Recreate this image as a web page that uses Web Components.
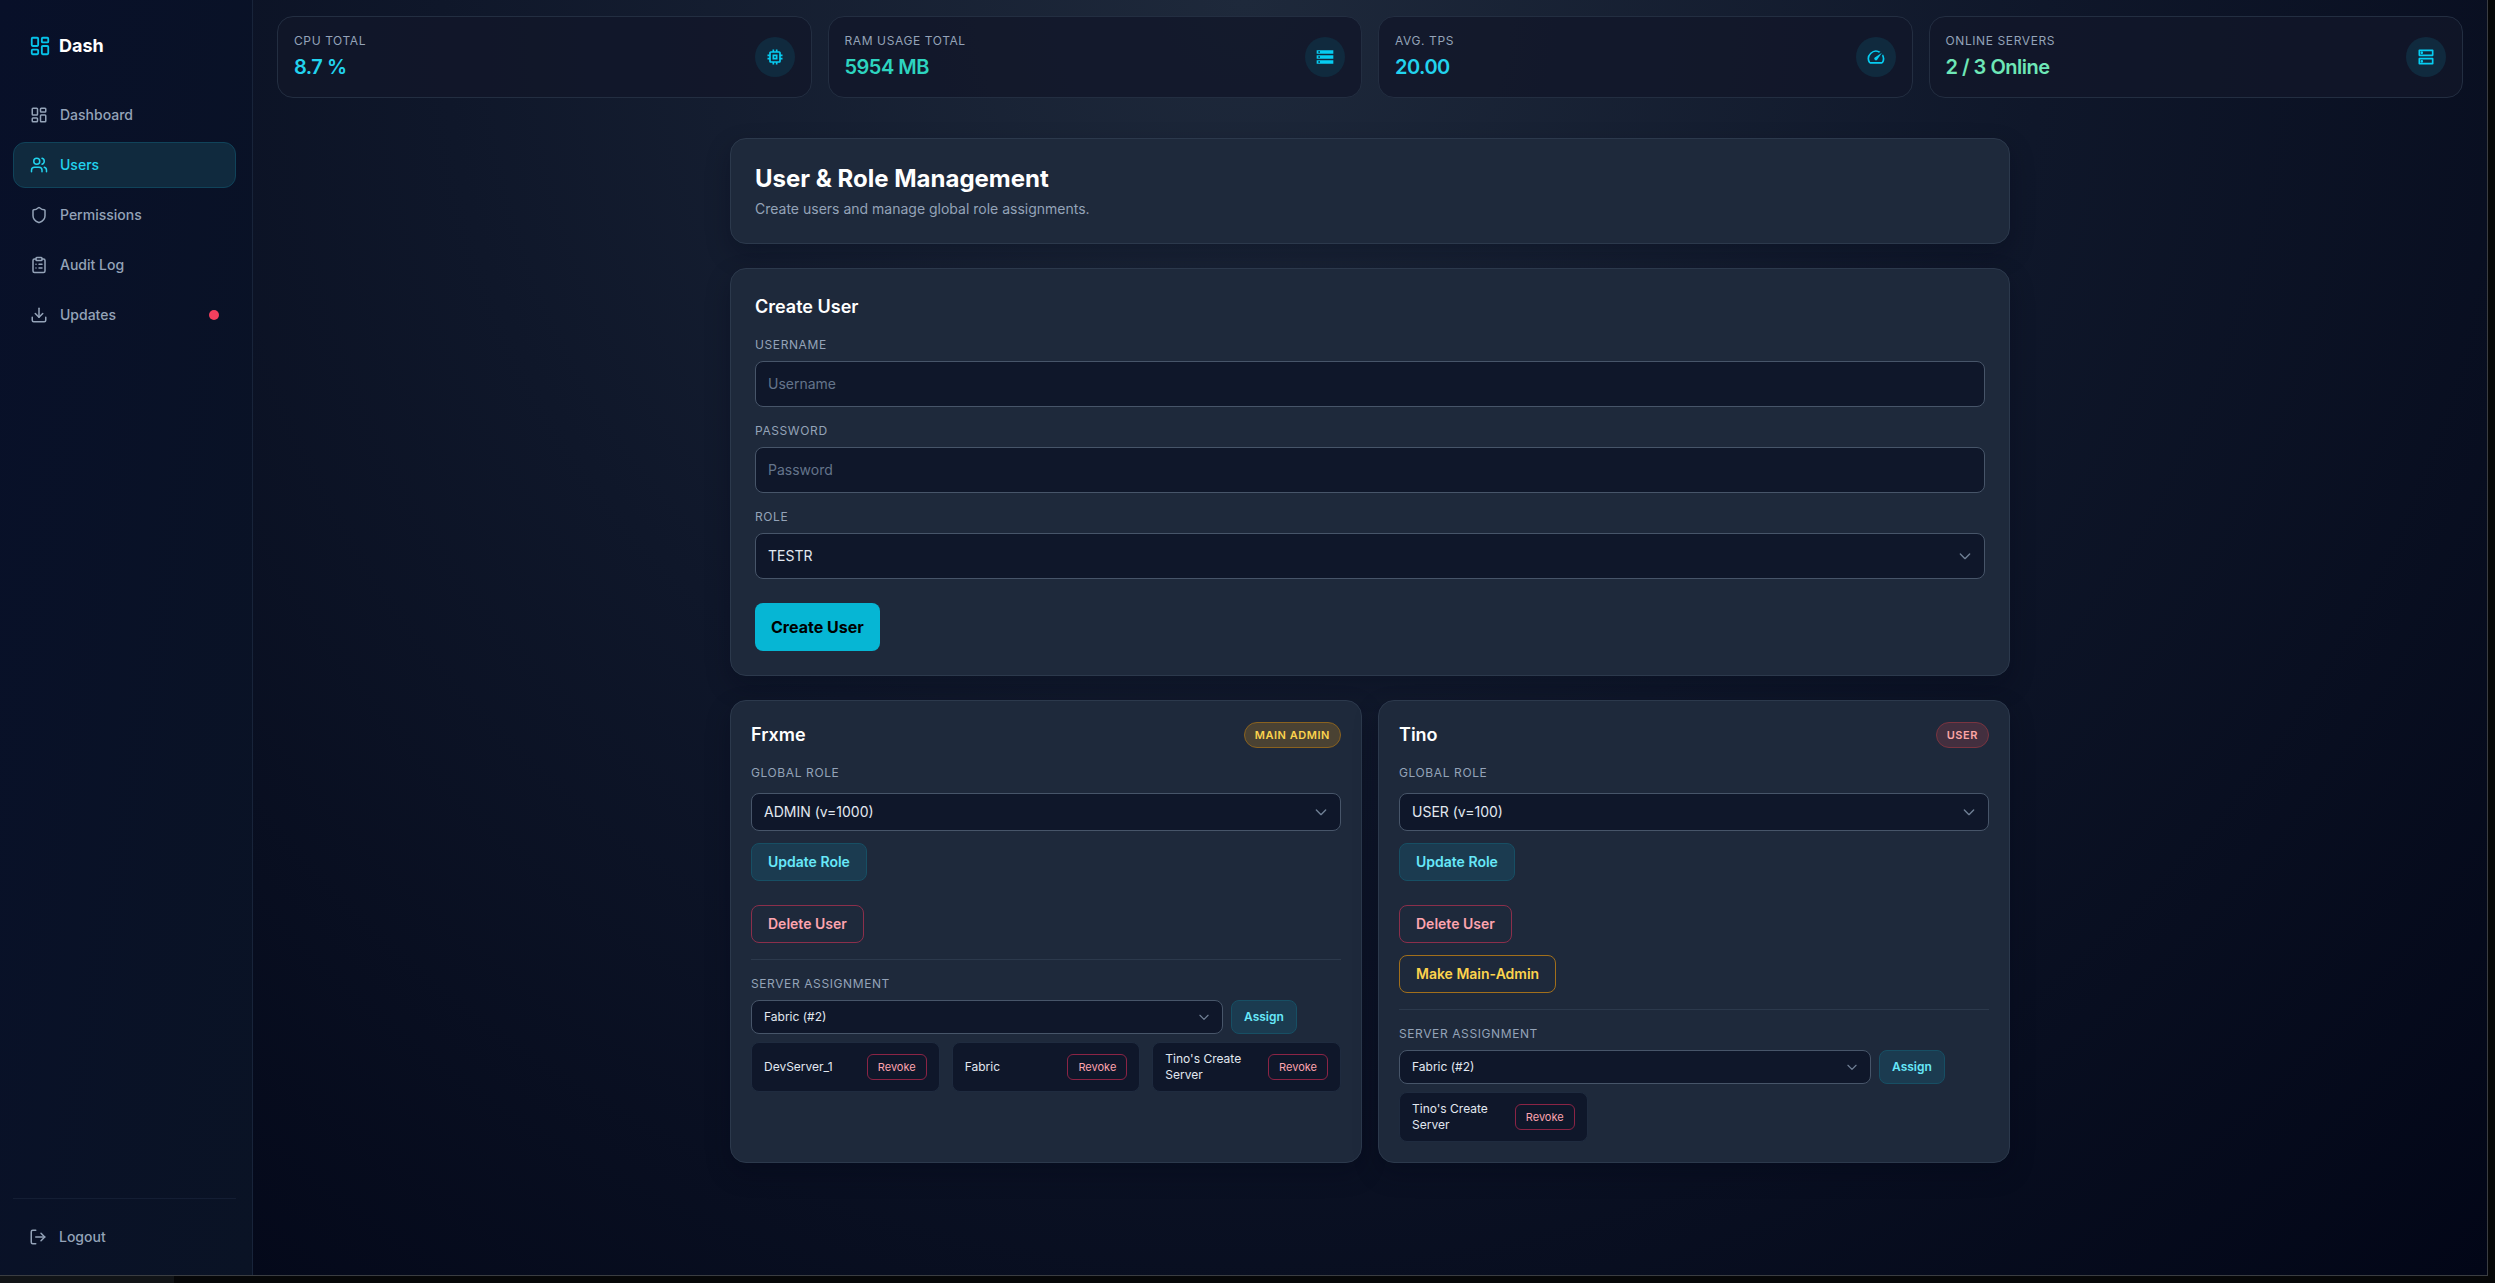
<!DOCTYPE html>
<html lang="en">
<head>
<meta charset="utf-8">
<meta name="viewport" content="width=device-width, initial-scale=1">
<title>Dash - Users</title>
<style>
  body {
    margin: 0;
    background: #060708;
    color: #e2e8f0;
    font-family: Inter, "Liberation Sans", sans-serif;
    font-size: 14px;
    line-height: 20px;
  }
</style>
</head>
<body>

<dash-app>
  <dash-sidebar slot="sidebar">
    <nav-link icon="dashboard">Dashboard</nav-link>
    <nav-link icon="users" active>Users</nav-link>
    <nav-link icon="shield">Permissions</nav-link>
    <nav-link icon="clipboard">Audit Log</nav-link>
    <nav-link icon="download" dot>Updates</nav-link>
  </dash-sidebar>

  <stat-card slot="stats" icon="memory" label="CPU Total">8.7 %</stat-card>
  <stat-card slot="stats" icon="storage" label="RAM Usage Total" tone="teal">5954 MB</stat-card>
  <stat-card slot="stats" icon="speed" label="Avg. TPS">20.00</stat-card>
  <stat-card slot="stats" icon="dns" label="Online Servers" tone="green">2 / 3 Online</stat-card>

  <page-header heading="User &amp; Role Management">Create users and manage global role assignments.</page-header>
  <create-user-form></create-user-form>
  <user-grid>
    <user-card name="Frxme" badge="Main Admin" tone="amber" role="ADMIN (v=1000)">
      <server-chip>DevServer_1</server-chip>
      <server-chip>Fabric</server-chip>
      <server-chip>Tino's Create Server</server-chip>
    </user-card>
    <user-card name="Tino" badge="User" tone="rose" role="USER (v=100)" promotable>
      <server-chip>Tino's Create Server</server-chip>
    </user-card>
  </user-grid>
</dash-app>

<script>
// stroked icons are 24x24 outlines, filled ones are 24x24 solids
const strokeIcons = {
  dashboard: '<rect width="7" height="9" x="3" y="3" rx="1"/><rect width="7" height="5" x="14" y="3" rx="1"/><rect width="7" height="9" x="14" y="12" rx="1"/><rect width="7" height="5" x="3" y="16" rx="1"/>',
  users: '<path d="M16 21v-2a4 4 0 0 0-4-4H6a4 4 0 0 0-4 4v2"/><circle cx="9" cy="7" r="4"/><path d="M22 21v-2a4 4 0 0 0-3-3.87"/><path d="M16 3.13a4 4 0 0 1 0 7.75"/>',
  shield: '<path d="M20 13c0 5-3.5 7.5-7.66 8.95a1 1 0 0 1-.67-.01C7.5 20.5 4 18 4 13V6a1 1 0 0 1 1-1c2 0 4.5-1.2 6.24-2.72a1.17 1.17 0 0 1 1.52 0C14.51 3.81 17 5 19 5a1 1 0 0 1 1 1z"/>',
  clipboard: '<rect width="8" height="4" x="8" y="2" rx="1"/><path d="M16 4h2a2 2 0 0 1 2 2v14a2 2 0 0 1-2 2H6a2 2 0 0 1-2-2V6a2 2 0 0 1 2-2h2"/><path d="M12 11h4"/><path d="M12 16h4"/><path d="M8 11h.01"/><path d="M8 16h.01"/>',
  download: '<path d="M21 15v4a2 2 0 0 1-2 2H5a2 2 0 0 1-2-2v-4"/><path d="m7 10 5 5 5-5"/><path d="M12 15V3"/>',
  logout: '<path d="M9 21H5a2 2 0 0 1-2-2V5a2 2 0 0 1 2-2h4"/><path d="m16 17 5-5-5-5"/><path d="M21 12H9"/>',
  chevron: '<path d="m5 9 7 7 7-7"/>'
};

const solidIcons = {
  memory: '<path d="M15 9H9v6h6V9zm-2 4h-2v-2h2v2zm8-2V9h-2V7c0-1.1-.9-2-2-2h-2V3h-2v2h-2V3H9v2H7c-1.1 0-2 .9-2 2v2H3v2h2v2H3v2h2v2c0 1.1.9 2 2 2h2v2h2v-2h2v2h2v-2h2c1.1 0 2-.9 2-2v-2h2v-2h-2v-2h2zm-4 6H7V7h10v10z"/>',
  storage: '<path d="M2 20h20v-4H2v4zm2-3h2v2H4v-2zM2 4v4h20V4H2zm4 3H4V5h2v2zm-4 7h20v-4H2v4zm2-3h2v2H4v-2z"/>',
  speed: '<path d="m20.38 8.57-1.23 1.85a8 8 0 0 1-.22 7.58H5.07A8 8 0 0 1 15.58 6.85l1.85-1.23A10 10 0 0 0 3.35 19a2 2 0 0 0 1.72 1h13.85a2 2 0 0 0 1.74-1 10 10 0 0 0-.27-10.44zm-9.79 6.84a2 2 0 0 0 2.83 0l5.66-8.49-8.49 5.66a2 2 0 0 0 0 2.83z"/>',
  dns: '<path d="M19 15v4H5v-4h14m1-2H4c-.55 0-1 .45-1 1v6c0 .55.45 1 1 1h16c.55 0 1-.45 1-1v-6c0-.55-.45-1-1-1zM7 18.5c-.82 0-1.5-.67-1.5-1.5s.68-1.5 1.5-1.5 1.5.67 1.5 1.5-.67 1.5-1.5 1.5zM19 5v4H5V5h14m1-2H4c-.55 0-1 .45-1 1v6c0 .55.45 1 1 1h16c.55 0 1-.45 1-1V4c0-.55-.45-1-1-1zM7 8.5c-.82 0-1.5-.67-1.5-1.5S6.18 5.5 7 5.5s1.5.68 1.5 1.5S7.83 8.5 7 8.5z"/>'
};

function icon(name, size) {
  const box = `width="${size}" height="${size}" viewBox="0 0 24 24" aria-hidden="true"`;
  if (solidIcons[name]) {
    return `<svg ${box} fill="currentColor">${solidIcons[name]}</svg>`;
  }
  return `<svg ${box} fill="none" stroke="currentColor" stroke-width="2" stroke-linecap="round" stroke-linejoin="round">${strokeIcons[name]}</svg>`;
}

// shared by every component that draws a panel
const panelStyles = `
  .panel {
    box-sizing: border-box;
    background: #1e293b;
    border: 1px solid #2c394c;
    border-radius: 16px;
    box-shadow: 0 10px 24px rgba(2, 6, 23, 0.3);
  }
`;

// shared by every component with form controls
const formStyles = `
  label {
    color: #94a3b8;
    font-size: 12px;
    line-height: 16px;
    letter-spacing: 0.05em;
    text-transform: uppercase;
  }
  input, select, button {
    box-sizing: border-box;
    margin: 0;
    font: inherit;
    border-radius: 8px;
  }
  input, select {
    width: 100%;
    padding: 12px;
    color: #e2e8f0;
    background: #0f172a;
    border: 1px solid #475569;
  }
  input::placeholder { color: #64748b; opacity: 1; }
  select { appearance: none; }
  .select { display: grid; align-items: center; color: #718096; }
  .select > * { grid-area: 1 / 1; }
  .select svg { justify-self: end; margin-right: 12px; pointer-events: none; }
  button {
    padding: 8px 16px;
    font-weight: 600;
    border: 1px solid;
    cursor: pointer;
  }
  .cyan { color: #67e8f9; background: #1b3b50; border-color: #174f64; }
  .rose { color: #fda4af; background: none; border-color: #8b2f4b; }
  .amber { color: #fcd34d; background: none; border-color: #a16f1b; }
`;

class DashApp extends HTMLElement {
  constructor() {
    super();
    this.attachShadow({ mode: 'open' }).innerHTML = `
      <style>
        :host {
          display: grid;
          grid-template: 1fr 7px / 1fr 7px;
          min-height: 100vh;
        }
        .window {
          display: grid;
          grid-template-columns: 253px 1fr;
          border: solid #3a3d42;
          border-width: 0 1px 1px 0;
          background: radial-gradient(circle at top, #1e293b, #0f172a 45%, #020617);
        }
        main {
          display: flex;
          flex-direction: column;
          gap: 40px;
          padding: 16px 24px;
        }
        .stats {
          display: grid;
          grid-template-columns: repeat(4, 1fr);
          gap: 16px;
        }
        .content {
          box-sizing: border-box;
          display: flex;
          flex-direction: column;
          gap: 24px;
          width: 100%;
          max-width: 1280px;
          margin: 0 auto;
        }
        .thumb { grid-row: 2; width: 7%; background: #111417; }
      </style>
      <div class="window">
        <slot name="sidebar"></slot>
        <main>
          <section class="stats"><slot name="stats"></slot></section>
          <section class="content"><slot></slot></section>
        </main>
      </div>
      <div class="thumb"></div>
    `;
  }
}

class DashSidebar extends HTMLElement {
  constructor() {
    super();
    this.attachShadow({ mode: 'open' }).innerHTML = `
      <style>
        :host {
          box-sizing: border-box;
          display: flex;
          flex-direction: column;
          padding: 28px 16px 16px 13px;
          border-right: 1px solid #18243a;
          background: linear-gradient(100deg, #081029, #0a1325);
        }
        .brand {
          display: flex;
          align-items: center;
          gap: 8px;
          padding: 4px 16px;
          color: #fff;
          font-size: 18px;
          font-weight: 700;
          line-height: 28px;
        }
        .brand svg { color: #06c3ea; }
        nav {
          display: flex;
          flex-direction: column;
          flex: 1;
          gap: 4px;
          margin-top: 28px;
        }
        .footer {
          padding-top: 16px;
          border-top: 1px solid #141e34;
        }
        .footer a {
          display: flex;
          align-items: center;
          gap: 12px;
          padding: 12px 16px;
          color: #94a3b8;
          font-weight: 500;
          text-decoration: none;
        }
      </style>
      <div class="brand">${icon('dashboard', 22)}<span>Dash</span></div>
      <nav><slot></slot></nav>
      <div class="footer"><a href="#logout">${icon('logout', 18)}<span>Logout</span></a></div>
    `;
  }
}

class NavLink extends HTMLElement {
  constructor() {
    super();
    const dot = this.hasAttribute('dot') ? '<i class="dot"></i>' : '';
    this.attachShadow({ mode: 'open' }).innerHTML = `
      <style>
        :host { display: block; }
        a {
          display: flex;
          align-items: center;
          gap: 12px;
          padding: 12px 16px;
          border: 1px solid transparent;
          border-radius: 12px;
          color: #94a3b8;
          font-weight: 500;
          text-decoration: none;
        }
        :host([active]) a {
          color: #22d3ee;
          background: #102a3e;
          border-color: #10435a;
        }
        .dot {
          width: 10px;
          height: 10px;
          margin-left: auto;
          border-radius: 50%;
          background: #f43f5e;
        }
      </style>
      <a href="#">${icon(this.getAttribute('icon'), 18)}<span><slot></slot></span>${dot}</a>
    `;
  }
}

class StatCard extends HTMLElement {
  constructor() {
    super();
    this.attachShadow({ mode: 'open' }).innerHTML = `
      <style>
        :host {
          display: flex;
          align-items: center;
          justify-content: space-between;
          padding: 16px;
          border: 1px solid #232e41;
          border-radius: 16px;
          background: rgba(17, 22, 41, 0.8);
        }
        .label {
          margin-bottom: 4px;
          color: #94a3b8;
          font-size: 12px;
          line-height: 16px;
          letter-spacing: 0.05em;
          text-transform: uppercase;
        }
        .value {
          color: #22d3ee;
          font-size: 20px;
          font-weight: 600;
          line-height: 28px;
          letter-spacing: -0.025em;
        }
        :host([tone="teal"]) .value { color: #2dd4bf; }
        :host([tone="green"]) .value { color: #6ee7b7; }
        .bubble {
          display: grid;
          place-items: center;
          width: 40px;
          height: 40px;
          border-radius: 50%;
          color: #06cdf2;
          background: #102a3e;
        }
      </style>
      <div>
        <div class="label">${this.getAttribute('label')}</div>
        <div class="value"><slot></slot></div>
      </div>
      <div class="bubble">${icon(this.getAttribute('icon'), 20)}</div>
    `;
  }
}

class PageHeader extends HTMLElement {
  constructor() {
    super();
    this.attachShadow({ mode: 'open' }).innerHTML = `
      <style>
        :host { display: block; }
        ${panelStyles}
        .panel { padding: 24px; }
        h1 { margin: 0 0 4px; color: #fff; font-size: 24px; font-weight: 700; line-height: 32px; }
        p { margin: 0; color: #94a3b8; }
      </style>
      <header class="panel">
        <h1></h1>
        <p><slot></slot></p>
      </header>
    `;
    this.shadowRoot.querySelector('h1').textContent = this.getAttribute('heading');
  }
}

class CreateUserForm extends HTMLElement {
  constructor() {
    super();
    this.attachShadow({ mode: 'open' }).innerHTML = `
      <style>
        :host { display: block; }
        ${panelStyles}
        ${formStyles}
        form { display: flex; flex-direction: column; gap: 16px; padding: 24px; }
        h2 { margin: 0; color: #fff; font-size: 18px; font-weight: 600; line-height: 28px; }
        .field { display: grid; gap: 8px; }
        button {
          align-self: flex-start;
          margin-top: 8px;
          padding: 12px 16px;
          border: 0;
          color: #000;
          background: #06b6d4;
          font-size: 16px;
          font-weight: 700;
          line-height: 24px;
        }
      </style>
      <form class="panel">
        <h2>Create User</h2>
        <div class="field">
          <label for="username">Username</label>
          <input id="username" type="text" placeholder="Username" autocomplete="off">
        </div>
        <div class="field">
          <label for="password">Password</label>
          <input id="password" type="password" placeholder="Password" autocomplete="new-password">
        </div>
        <div class="field">
          <label for="role">Role</label>
          <div class="select">
            <select id="role"><option>TESTR</option></select>
            ${icon('chevron', 16)}
          </div>
        </div>
        <button type="button">Create User</button>
      </form>
    `;
  }
}

class UserGrid extends HTMLElement {
  constructor() {
    super();
    this.attachShadow({ mode: 'open' }).innerHTML = `
      <style>
        :host { display: grid; grid-template-columns: 1fr 1fr; gap: 16px; }
      </style>
      <slot></slot>
    `;
  }
}

class UserCard extends HTMLElement {
  constructor() {
    super();
    const promote = this.hasAttribute('promotable')
      ? '<button class="amber" type="button">Make Main-Admin</button>'
      : '';
    this.attachShadow({ mode: 'open' }).innerHTML = `
      <style>
        :host { display: grid; }
        ${panelStyles}
        ${formStyles}
        .panel { padding: 20px; }
        header {
          display: flex;
          align-items: center;
          justify-content: space-between;
          margin-bottom: 16px;
        }
        h3 { margin: 0; color: #fff; font-size: 18px; font-weight: 600; line-height: 28px; }
        .badge {
          padding: 4px 10px;
          border: 1px solid #7a3440;
          border-radius: 16px;
          color: #fca5a5;
          background: #432f3f;
          font-size: 11px;
          font-weight: 600;
          line-height: 16px;
          letter-spacing: 0.05em;
          text-transform: uppercase;
        }
        :host([tone="amber"]) .badge {
          color: #fcd34d;
          background: #4a4233;
          border-color: #8a621f;
        }
        .stack {
          display: flex;
          flex-direction: column;
          align-items: flex-start;
          gap: 12px;
        }
        .stack .select { width: 100%; }
        .stack select { padding: 8px 12px; }
        .actions { margin-top: 24px; }
        .servers {
          display: grid;
          gap: 8px;
          margin-top: 16px;
          padding-top: 16px;
          border-top: 1px solid #2c394c;
        }
        .assign { display: flex; gap: 8px; font-size: 12px; line-height: 16px; }
        .assign .select { width: 80%; }
        .assign select { padding: 8px 12px; }
        .assign button { padding: 8px 12px; }
        .chips { display: grid; grid-template-columns: repeat(3, 1fr); gap: 12px; }
      </style>
      <article class="panel">
        <header>
          <h3>${this.getAttribute('name')}</h3>
          <span class="badge">${this.getAttribute('badge')}</span>
        </header>
        <div class="stack">
          <label for="role">Global Role</label>
          <div class="select">
            <select id="role"><option>${this.getAttribute('role')}</option></select>
            ${icon('chevron', 16)}
          </div>
          <button class="cyan" type="button">Update Role</button>
        </div>
        <div class="stack actions">
          <button class="rose" type="button">Delete User</button>
          ${promote}
        </div>
        <section class="servers">
          <label for="server">Server Assignment</label>
          <div class="assign">
            <div class="select">
              <select id="server"><option>Fabric (#2)</option></select>
              ${icon('chevron', 14)}
            </div>
            <button class="cyan" type="button">Assign</button>
          </div>
          <div class="chips"><slot></slot></div>
        </section>
      </article>
    `;
  }
}

class ServerChip extends HTMLElement {
  constructor() {
    super();
    this.attachShadow({ mode: 'open' }).innerHTML = `
      <style>
        :host {
          box-sizing: border-box;
          display: flex;
          align-items: center;
          justify-content: space-between;
          gap: 8px;
          min-height: 50px;
          padding: 8px 12px;
          border: 1px solid #1f2b3f;
          border-radius: 8px;
          background: #0f172a;
          color: #e2e8f0;
          font-size: 12px;
          line-height: 16px;
        }
        button {
          margin: 0;
          padding: 4px 10px;
          border: 1px solid #8b2445;
          border-radius: 6px;
          color: #fda4af;
          background: none;
          font: inherit;
          font-size: 11px;
          cursor: pointer;
        }
      </style>
      <span><slot></slot></span>
      <button type="button">Revoke</button>
    `;
  }
}

customElements.define('dash-app', DashApp);
customElements.define('dash-sidebar', DashSidebar);
customElements.define('nav-link', NavLink);
customElements.define('stat-card', StatCard);
customElements.define('page-header', PageHeader);
customElements.define('create-user-form', CreateUserForm);
customElements.define('user-grid', UserGrid);
customElements.define('user-card', UserCard);
customElements.define('server-chip', ServerChip);
</script>
</body>
</html>
